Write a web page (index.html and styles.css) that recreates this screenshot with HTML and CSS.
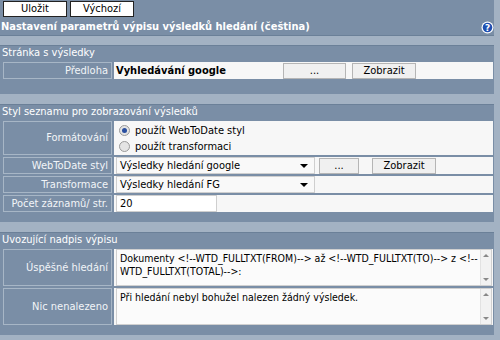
FILE: index.html
```html
<!DOCTYPE html>
<html lang="cs">

<head>
    <meta charset="UTF-8">
    <title>Nastavení parametrů výpisu výsledků hledání</title>
    <link rel="stylesheet" href="styles.css">
</head>

<body>
    <div class="page">
        <div class="panel panel-top">
            <div class="toolbar">
                <button class="tool-btn">Uložit</button>
                <button class="tool-btn">Výchozí</button>
            </div>
            <div class="title">
                <span>Nastavení parametrů výpisu výsledků hledání (čeština)</span>
                <svg class="help" width="13" height="13" viewBox="0 0 13 13">
                    <circle cx="6.5" cy="6.5" r="6" fill="#ffffff" />
                    <circle cx="6.5" cy="6.5" r="4.8" fill="#1f4fb0" />
                    <text x="6.5" y="10" text-anchor="middle" font-family="DejaVu Sans, sans-serif" font-size="9" font-weight="bold" fill="#ffffff">?</text>
                </svg>
            </div>
        </div>

        <div class="panel panel-1">
            <div class="sect-head">Stránka s výsledky</div>
            <div class="form">
                <div class="lbl">Předloha</div>
                <div class="val">
                    <b class="tpl-name">Vyhledávání google</b>
                    <button class="btn btn-dots">...</button>
                    <button class="btn btn-show">Zobrazit</button>
                </div>
            </div>
        </div>

        <div class="panel panel-2">
            <div class="sect-head">Styl seznamu pro zobrazování výsledků</div>
            <div class="form">
                <div class="lbl lbl-tall">Formátování</div>
                <div class="val val-radios">
                    <label class="radio"><span class="dot on"></span>použít WebToDate styl</label>
                    <label class="radio"><span class="dot"></span>použít transformaci</label>
                </div>

                <div class="lbl">WebToDate styl</div>
                <div class="val">
                    <div class="select">Výsledky hledání google<span class="arrow"></span></div>
                    <button class="btn btn-dots2">...</button>
                    <button class="btn btn-show2">Zobrazit</button>
                </div>

                <div class="lbl">Transformace</div>
                <div class="val">
                    <div class="select">Výsledky hledání FG<span class="arrow"></span></div>
                </div>

                <div class="lbl">Počet záznamů/ str.</div>
                <div class="val">
                    <div class="input">20</div>
                </div>
            </div>
        </div>

        <div class="panel panel-3">
            <div class="sect-head">Uvozující nadpis výpisu</div>
            <div class="form">
                <div class="lbl lbl-area">Úspěšné hledání</div>
                <div class="val val-area">
                    <div class="textarea">
                        <div class="area-text">Dokumenty &lt;!--WTD_FULLTXT(FROM)--&gt; až &lt;!--WTD_FULLTXT(TO)--&gt; z &lt;!--WTD_FULLTXT(TOTAL)--&gt;:</div>
                        <div class="scroll"><span class="up"></span><span class="down"></span></div>
                    </div>
                </div>

                <div class="lbl lbl-area">Nic nenalezeno</div>
                <div class="val val-area">
                    <div class="textarea">
                        <div class="area-text">Při hledání nebyl bohužel nalezen žádný výsledek.</div>
                        <div class="scroll"><span class="up"></span><span class="down"></span></div>
                    </div>
                </div>
            </div>
        </div>
    </div>
</body>

</html>
```

FILE: styles.css
```css
body {
    margin: 0;
    padding: 0;
    background-color: #a3b2c3;
    font-family: "DejaVu Sans Condensed", "DejaVu Sans", Verdana, sans-serif;
    font-size: 11px;
    color: #000;
}

.page {
    width: 494px;
    height: 340px;
    overflow: hidden;
}

.panel {
    background-color: #7a8ea6;
}

.panel-top {
    height: 35px;
    border-bottom: 1px solid #6b8098;
}

.toolbar {
    display: flex;
    gap: 3px;
    padding: 1px 0 0 3px;
    height: 16px;
}

.tool-btn {
    width: 64px;
    height: 16px;
    margin: 0;
    padding: 0;
    background: #fff;
    border: 1px solid #222;
    font-family: inherit;
    font-size: 11px;
    color: #000;
    line-height: 14px;
}

.title {
    display: flex;
    align-items: center;
    justify-content: space-between;
    height: 18px;
    padding: 0 0 0 1px;
    color: #fff;
    font-weight: bold;
}

.help {
    display: block;
    margin-top: 3px;
}

.panel-1 {
    margin-top: 9px;
    height: 48px;
    border-top: 1px solid #6b8098;
}

.panel-2 {
    margin-top: 10px;
    height: 117px;
    border-top: 1px solid #6b8098;
}

.panel-3 {
    margin-top: 10px;
    height: 102px;
    border-top: 1px solid #6b8098;
}

.sect-head {
    height: 15px;
    line-height: 14px;
    padding-left: 2px;
    color: #fff;
}

.form {
    display: grid;
    grid-template-columns: 109px 1fr;
    gap: 2px;
    padding: 1px 1px 0 3px;
}

.lbl {
    border: 1px solid #a7b6c6;
    background-color: #7a8ea6;
    color: #f2f5f8;
    text-align: right;
    padding-right: 3px;
    height: 15px;
    line-height: 15px;
    white-space: nowrap;
}

.lbl-tall {
    height: 32px;
    line-height: 32px;
}

.lbl-area {
    height: 35px;
    line-height: 35px;
}

.val {
    background-color: #f7f7f7;
    display: flex;
    align-items: center;
    padding-left: 2px;
    min-height: 17px;
}

.val-area {
    align-items: flex-start;
}

.tpl-name {
    width: 167px;
}

.btn {
    height: 16px;
    margin: 0;
    padding: 0;
    background: #f0f0f0;
    border: 1px solid #b5b5b5;
    font-family: inherit;
    font-size: 11px;
    color: #000;
    line-height: 14px;
}

.btn-dots {
    width: 63px;
}

.btn-show {
    width: 64px;
    margin-left: 6px;
}

.btn-dots2 {
    width: 40px;
    margin-left: 4px;
}

.btn-show2 {
    width: 64px;
    margin-left: 13px;
}

.val-radios {
    flex-direction: column;
    align-items: flex-start;
    justify-content: center;
    gap: 3px;
    padding-left: 5px;
}

.radio {
    display: flex;
    align-items: center;
    gap: 5px;
    height: 13px;
}

.dot {
    width: 9px;
    height: 9px;
    border-radius: 50%;
    border: 1px solid #9a9a9a;
    background: #e4e4e4;
    position: relative;
}

.dot.on::after {
    content: "";
    position: absolute;
    left: 2px;
    top: 2px;
    width: 5px;
    height: 5px;
    border-radius: 50%;
    background: #2a4fa0;
}

.select {
    position: relative;
    width: 194px;
    height: 15px;
    line-height: 15px;
    padding-left: 3px;
    border: 1px solid #cfcfcf;
    background: #f9f9f9;
}

.arrow {
    position: absolute;
    right: 6px;
    top: 6px;
    border-left: 4px solid transparent;
    border-right: 4px solid transparent;
    border-top: 4px solid #000;
}

.input {
    width: 96px;
    height: 15px;
    line-height: 15px;
    padding-left: 3px;
    border: 1px solid #cfcfcf;
    background: #fff;
}

.textarea {
    display: flex;
    width: 374px;
    height: 35px;
    border: 1px solid #d0d0d0;
    background: #fbfbfb;
}

.area-text {
    flex: 1;
    padding: 2px 2px 0 3px;
    font-size: 10.5px;
    line-height: 13px;
}

.scroll {
    width: 10px;
    border-left: 1px solid #e2e2e2;
    background: #f2f2f2;
    display: flex;
    flex-direction: column;
    justify-content: space-between;
    align-items: center;
    padding: 4px 0;
}

.up {
    border-left: 3px solid transparent;
    border-right: 3px solid transparent;
    border-bottom: 3px solid #888;
}

.down {
    border-left: 3px solid transparent;
    border-right: 3px solid transparent;
    border-top: 3px solid #888;
}
```
